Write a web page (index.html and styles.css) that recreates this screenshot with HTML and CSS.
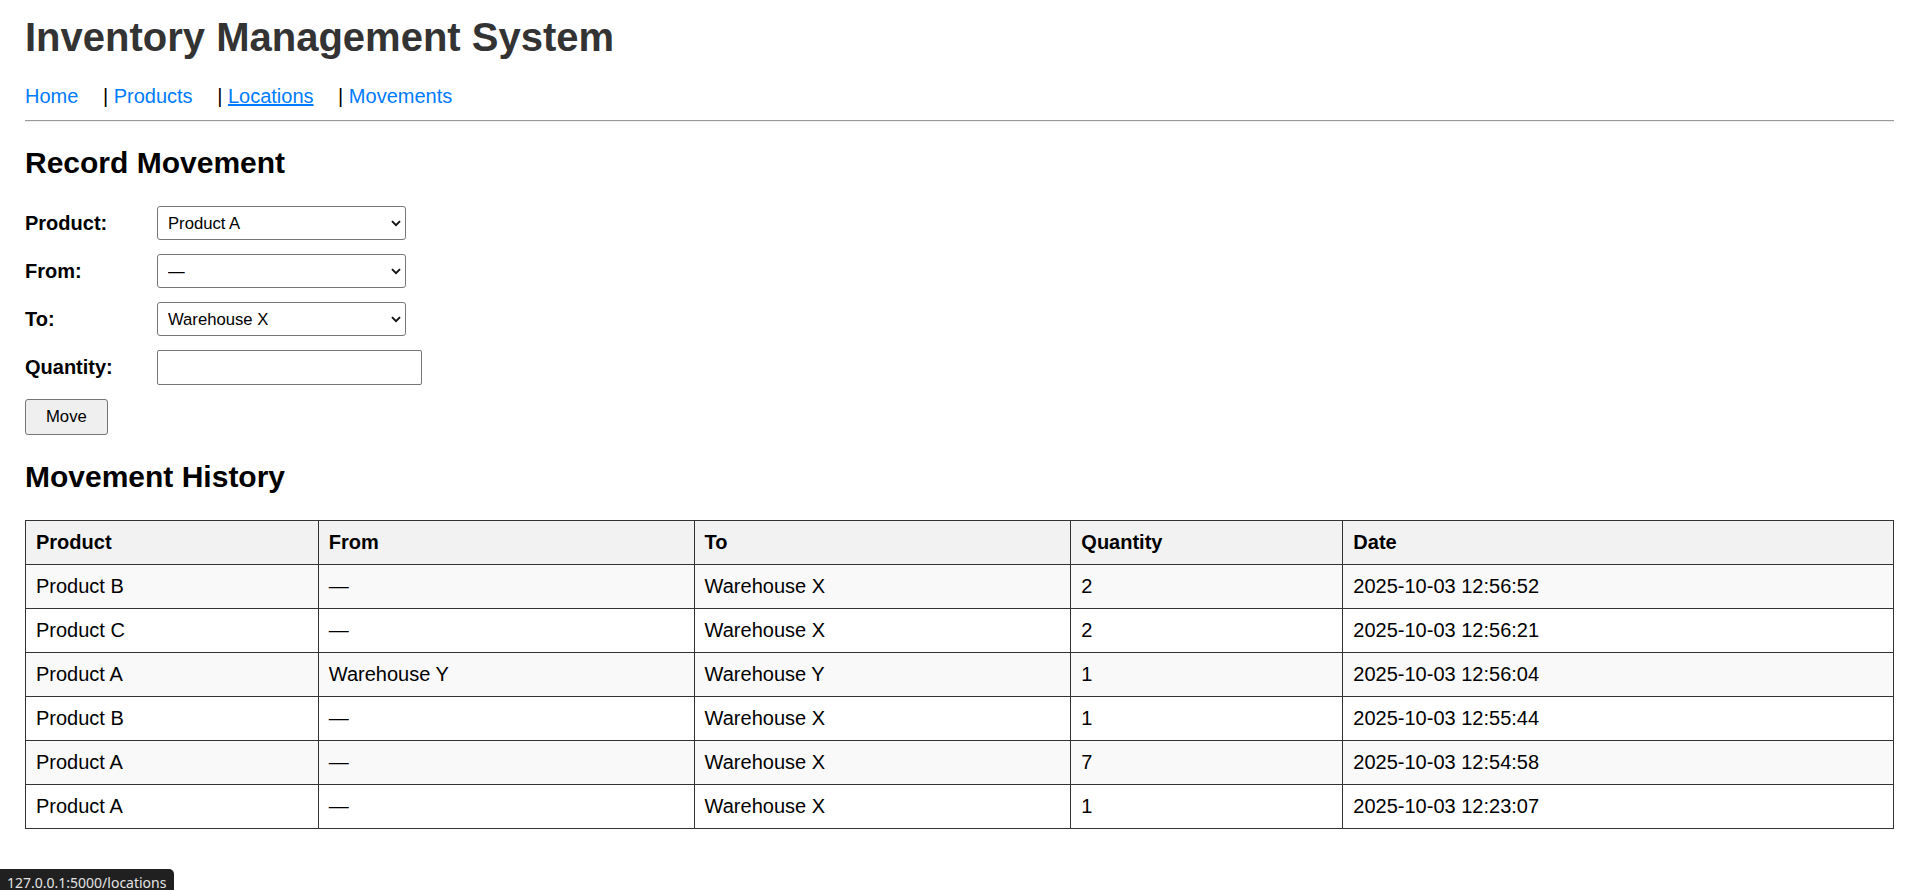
FILE: index.html
```html
<!DOCTYPE html>
<html lang="en">
<head>
<meta charset="utf-8">
<title>Inventory Management System</title>
<link rel="stylesheet" href="styles.css">
</head>
<body>
<div class="page">
  <h1 class="title">Inventory Management System</h1>
  <nav class="nav"><a href="#">Home</a> | <a href="#">Products</a> | <a href="#" class="is-hover">Locations</a> | <a href="#">Movements</a></nav>
  <hr class="rule">

  <h2 class="section-title">Record Movement</h2>
  <form class="move-form">
    <div class="field">
      <label class="field-label" for="product">Product:</label>
      <span class="select-wrap">
        <select class="select" id="product">
          <option>Product A</option>
          <option>Product B</option>
          <option>Product C</option>
        </select>
        <svg class="chevron" width="10" height="7" viewBox="0 0 10 7"><path d="M1 1.2 L5 5.2 L9 1.2" fill="none" stroke="#111" stroke-width="1.9"/></svg>
      </span>
    </div>
    <div class="field">
      <label class="field-label" for="from">From:</label>
      <span class="select-wrap">
        <select class="select" id="from">
          <option>—</option>
          <option>Warehouse X</option>
          <option>Warehouse Y</option>
        </select>
        <svg class="chevron" width="10" height="7" viewBox="0 0 10 7"><path d="M1 1.2 L5 5.2 L9 1.2" fill="none" stroke="#111" stroke-width="1.9"/></svg>
      </span>
    </div>
    <div class="field">
      <label class="field-label" for="to">To:</label>
      <span class="select-wrap">
        <select class="select" id="to">
          <option>Warehouse X</option>
          <option>Warehouse Y</option>
        </select>
        <svg class="chevron" width="10" height="7" viewBox="0 0 10 7"><path d="M1 1.2 L5 5.2 L9 1.2" fill="none" stroke="#111" stroke-width="1.9"/></svg>
      </span>
    </div>
    <div class="field">
      <label class="field-label" for="qty">Quantity:</label>
      <input class="input" id="qty" type="text">
    </div>
    <button class="btn" type="button">Move</button>
  </form>

  <h2 class="section-title history-title">Movement History</h2>
  <table class="history">
    <thead>
      <tr><th>Product</th><th>From</th><th>To</th><th>Quantity</th><th>Date</th></tr>
    </thead>
    <tbody>
      <tr><td>Product B</td><td>—</td><td>Warehouse X</td><td>2</td><td>2025-10-03 12:56:52</td></tr>
      <tr><td>Product C</td><td>—</td><td>Warehouse X</td><td>2</td><td>2025-10-03 12:56:21</td></tr>
      <tr><td>Product A</td><td>Warehouse Y</td><td>Warehouse Y</td><td>1</td><td>2025-10-03 12:56:04</td></tr>
      <tr><td>Product B</td><td>—</td><td>Warehouse X</td><td>1</td><td>2025-10-03 12:55:44</td></tr>
      <tr><td>Product A</td><td>—</td><td>Warehouse X</td><td>7</td><td>2025-10-03 12:54:58</td></tr>
      <tr><td>Product A</td><td>—</td><td>Warehouse X</td><td>1</td><td>2025-10-03 12:23:07</td></tr>
    </tbody>
  </table>
</div>
<div class="status">127.0.0.1:5000/locations</div>
</body>
</html>
```

FILE: styles.css
```css
* { box-sizing: border-box; }

html, body {
  margin: 0;
  padding: 0;
  background: #fff;
}

body {
  font-family: "Liberation Sans", Arial, sans-serif;
  font-size: 20px;
  color: #000;
}

.page {
  padding: 0 25px 30px;
}

.title {
  font-size: 40px;
  line-height: 46px;
  font-weight: bold;
  color: #333;
  margin: 14px 0 0;
}

.nav {
  margin-top: 25px;
  line-height: 23px;
}

.nav a {
  color: #007bff;
  text-decoration: none;
  margin-right: 19px;
}

.nav a.is-hover {
  text-decoration: underline;
}

.rule {
  margin: 12px 0 0;
  height: 0;
  border: 0;
  border-top: 1px solid #9a9a9a;
  border-bottom: 1px solid #eeeeee;
}

.section-title {
  font-size: 30px;
  line-height: 34px;
  font-weight: bold;
  margin: 24px 0 0;
}

.move-form {
  margin-top: 26px;
}

.field {
  display: flex;
  align-items: center;
  margin-bottom: 14px;
}

.field-label {
  flex: 0 0 132px;
  font-weight: bold;
  line-height: 23px;
}

.select-wrap {
  position: relative;
  display: inline-block;
  width: 249px;
  height: 34px;
}

.select {
  -webkit-appearance: none;
  appearance: none;
  display: block;
  width: 100%;
  height: 100%;
  margin: 0;
  padding: 0 28px 0 10px;
  border: 1px solid #767676;
  border-radius: 3px;
  background: #fff;
  color: #000;
  font-family: "Liberation Sans", Arial, sans-serif;
  font-size: 16.67px;
}

.chevron {
  position: absolute;
  right: 5px;
  top: 14px;
  pointer-events: none;
}

.input {
  display: block;
  width: 265px;
  height: 35px;
  margin: 0;
  padding: 0 6px;
  border: 1px solid #767676;
  border-radius: 2px;
  background: #fff;
  font-family: "Liberation Sans", Arial, sans-serif;
  font-size: 16.67px;
}

.btn {
  display: block;
  height: 36px;
  margin: 0;
  padding: 0 20px;
  border: 1px solid #767676;
  border-radius: 3px;
  background: #efefef;
  color: #000;
  font-family: "Liberation Sans", Arial, sans-serif;
  font-size: 16.67px;
}

.history-title {
  margin-top: 25px;
}

.history {
  width: 100%;
  margin-top: 26px;
  border-collapse: collapse;
}

.history th,
.history td {
  border: 1px solid #333;
  padding: 10px;
  line-height: 23px;
  text-align: left;
  font-size: 20px;
}

.history th {
  background: #f2f2f2;
  font-weight: bold;
}

.history tbody tr:nth-child(odd) {
  background: #f9f9f9;
}

.status {
  position: fixed;
  left: 0;
  top: 869px;
  width: 174px;
  padding: 4px 0 4px 7px;
  background: #202020;
  color: #e3e3e3;
  border-radius: 0 5px 0 0;
  font-family: "Noto Sans", sans-serif;
  font-size: 14px;
  line-height: 19px;
  white-space: nowrap;
}
```
